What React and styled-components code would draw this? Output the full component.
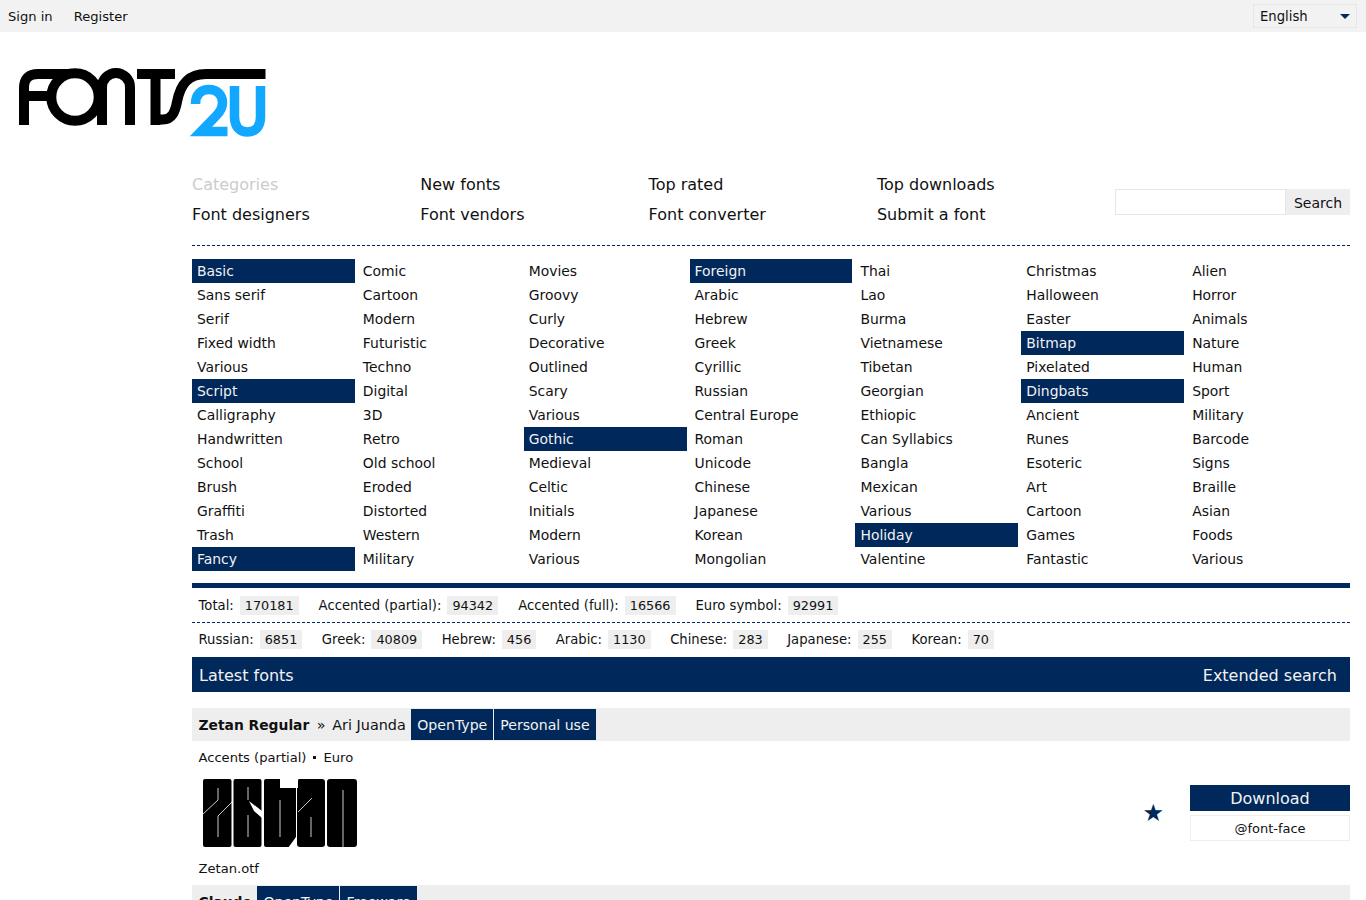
import styled, { createGlobalStyle } from "styled-components";

const navy = "#00285a";

const GlobalStyle = createGlobalStyle`
  html, body {
    margin: 0;
    height: 900px;
    overflow: hidden;
    background: #fff;
  }
  body {
    font-family: "DejaVu Sans", sans-serif;
    font-size: 13.92px;
    color: #111;
  }
`;

const TopBar = styled.div`
  display: flex;
  align-items: center;
  justify-content: space-between;
  height: 32px;
  padding: 0 8px;
  background: #f2f2f2;
  font-size: 13.1px;
`;

const TopLinks = styled.div`
  display: flex;
  gap: 21px;
`;

const LangSelect = styled.div`
  display: flex;
  align-items: center;
  justify-content: space-between;
  box-sizing: border-box;
  width: 104px;
  height: 24px;
  padding: 0 6px;
  border: 1px solid #e6e6e6;
  margin-right: 1px;
  font-size: 13.2px;
`;

const Caret = styled.span`
  width: 0;
  height: 0;
  border-left: 5px solid transparent;
  border-right: 5px solid transparent;
  border-top: 5px solid ${navy};
`;

const LogoBox = styled.div`
  height: 137px;
  padding-left: 18px;
`;

const LogoSvg = styled.svg`
  display: block;
  width: 250px;
  height: 72px;
  padding-top: 36px;
`;

const Main = styled.div`
  width: 1158px;
  margin-left: 192px;
`;

const NavRow = styled.div`
  display: flex;
  align-items: flex-start;
  justify-content: space-between;
  height: 76px;
  border-bottom: 1px dashed ${navy};
`;

const NavGrid = styled.div`
  display: grid;
  grid-template-columns: repeat(4, 228.3px);
  grid-auto-rows: 30px;
  align-items: center;
  font-size: 16px;
`;

const NavLink = styled.span`
  color: ${(p) => (p.$muted ? "#ccc" : "#111")};
`;

const SearchBox = styled.div`
  display: flex;
  height: 26px;
  margin-top: 20px;
`;

const SearchInput = styled.div`
  box-sizing: border-box;
  width: 171px;
  border: 1px solid #e6e6e6;
`;

const SearchButton = styled.div`
  display: flex;
  align-items: center;
  justify-content: center;
  box-sizing: border-box;
  width: 64px;
  padding-top: 1px;
  background: #eee;
  font-size: 14px;
`;

const CategoryGrid = styled.div`
  display: grid;
  grid-template-columns: repeat(7, 1fr);
  column-gap: 3px;
  padding: 13px 0 12px;
  border-bottom: 5px solid ${navy};
`;

const CategoryItem = styled.div`
  height: 24px;
  line-height: 24px;
  padding-left: 5px;
  background: ${(p) => (p.$head ? navy : "transparent")};
  color: ${(p) => (p.$head ? "#f2f2f2" : "#111")};
`;

const StatsRow = styled.div`
  display: flex;
  align-items: center;
  gap: ${(p) => (p.$second ? "19.5px" : "20px")};
  box-sizing: border-box;
  height: ${(p) => (p.$second ? "34px" : "35px")};
  padding: 0 0 ${(p) => (p.$second ? "2px" : "0")} 6.5px;
  font-size: 13.2px;
  border-bottom: ${(p) => (p.$second ? "none" : `1px dashed ${navy}`)};
`;

const Stat = styled.div`
  display: flex;
  align-items: center;
  gap: 6px;
`;

const Chip = styled.span`
  padding: ${(p) => (p.$low ? "1px 5px 0" : "0 5px")};
  line-height: ${(p) => (p.$low ? "18px" : "19px")};
  background: #eee;
  font-size: 12.8px;
`;

const SectionBar = styled.div`
  display: flex;
  align-items: center;
  justify-content: space-between;
  box-sizing: border-box;
  height: 35px;
  padding: 1px 13px 0 7px;
  background: ${navy};
  color: #f2f2f2;
  font-size: 16px;
`;

const FontHead = styled.div`
  display: flex;
  align-items: stretch;
  height: 33px;
  margin-top: ${(p) => p.$gap}px;
  padding-left: 6.5px;
  background: #eee;
`;

const FontName = styled.span`
  align-self: center;
  font-weight: 700;
  font-size: 13.85px;
  margin-right: ${(p) => (p.$alone ? "5px" : "0")};
`;

const FontAuthor = styled.span`
  align-self: center;
  margin-left: 7.5px;
  margin-right: 5px;
  font-size: 14.4px;
`;

const AuthorSep = styled.span`
  margin-right: 2px;
`;

const Tag = styled.span`
  display: flex;
  align-items: center;
  padding: 0 6px 0 ${(p) => (p.$next ? "6px" : "6.5px")};
  margin: 1px 0 1px ${(p) => (p.$next ? "1px" : "0")};
  background: ${navy};
  color: #f2f2f2;
  font-size: 14.1px;
`;

const FontMeta = styled.div`
  height: 33px;
  padding-left: 6.5px;
  line-height: 33px;
  font-size: 13.1px;
`;

const MetaDot = styled.span`
  display: inline-block;
  width: 3px;
  height: 3px;
  margin: 0 7px 2px 7px;
  background: #111;
  vertical-align: middle;
`;

const FontBody = styled.div`
  display: flex;
  align-items: center;
  justify-content: space-between;
  height: 72px;
  margin-top: 3px;
`;

const SpecimenSvg = styled.svg`
  display: block;
  width: 154px;
  height: 68px;
  margin-left: 11px;
`;

const Actions = styled.div`
  display: flex;
  align-items: center;
  gap: 26px;
`;

const Star = styled.span`
  color: ${navy};
  font-size: 24px;
  line-height: 1;
`;

const ActionStack = styled.div`
  display: flex;
  flex-direction: column;
  gap: 4px;
  width: 160px;
`;

const DownloadButton = styled.div`
  height: 26px;
  line-height: 28px;
  text-align: center;
  background: ${navy};
  color: #f2f2f2;
  font-size: 16px;
`;

const FaceButton = styled.div`
  box-sizing: border-box;
  height: 26px;
  line-height: 26px;
  text-align: center;
  border: 1px solid #eee;
  font-size: 13px;
`;

const FileName = styled.div`
  height: 36px;
  padding-left: 6.5px;
  line-height: 40px;
  font-size: 13.1px;
`;

const navLinks = [
  ["Categories", true],
  ["New fonts"],
  ["Top rated"],
  ["Top downloads"],
  ["Font designers"],
  ["Font vendors"],
  ["Font converter"],
  ["Submit a font"],
];

// a leading * marks a heading cell
const categories = [
  ["*Basic", "Sans serif", "Serif", "Fixed width", "Various", "*Script", "Calligraphy", "Handwritten", "School", "Brush", "Graffiti", "Trash", "*Fancy"],
  ["Comic", "Cartoon", "Modern", "Futuristic", "Techno", "Digital", "3D", "Retro", "Old school", "Eroded", "Distorted", "Western", "Military"],
  ["Movies", "Groovy", "Curly", "Decorative", "Outlined", "Scary", "Various", "*Gothic", "Medieval", "Celtic", "Initials", "Modern", "Various"],
  ["*Foreign", "Arabic", "Hebrew", "Greek", "Cyrillic", "Russian", "Central Europe", "Roman", "Unicode", "Chinese", "Japanese", "Korean", "Mongolian"],
  ["Thai", "Lao", "Burma", "Vietnamese", "Tibetan", "Georgian", "Ethiopic", "Can Syllabics", "Bangla", "Mexican", "Various", "*Holiday", "Valentine"],
  ["Christmas", "Halloween", "Easter", "*Bitmap", "Pixelated", "*Dingbats", "Ancient", "Runes", "Esoteric", "Art", "Cartoon", "Games", "Fantastic"],
  ["Alien", "Horror", "Animals", "Nature", "Human", "Sport", "Military", "Barcode", "Signs", "Braille", "Asian", "Foods", "Various"],
];

const statsTop = [
  ["Total:", "170181"],
  ["Accented (partial):", "94342"],
  ["Accented (full):", "16566"],
  ["Euro symbol:", "92991"],
];

const statsBottom = [
  ["Russian:", "6851"],
  ["Greek:", "40809"],
  ["Hebrew:", "456"],
  ["Arabic:", "1130"],
  ["Chinese:", "283"],
  ["Japanese:", "255"],
  ["Korean:", "70"],
];

function Logo() {
  return (
    <LogoSvg viewBox="18 68 250 72" role="img" aria-label="Fonts2U logo">
      <g fill="none" stroke="#000" strokeWidth="10">
        <path d="M24 125V88Q24 74 38 74H70" />
        <path d="M24 96H56" />
        <circle cx="75" cy="97" r="23.7" />
        <path d="M102 125V87A14 14 0 0 1 130 87V125" />
        <path d="M137 74H175" />
        <path d="M155.5 73V125" />
        <path d="M157 119.5H163C172 119.5 175 112 177 102C180 86 187 74 206 74H265.5" />
      </g>
      <g fill="none" stroke="#12a8ff" strokeWidth="9.5">
        <path d="M195.5 104C195.5 94 201 89.5 209 89.5C217 89.5 222.5 95 222.5 102.5C222.5 108 220 112 216 116L201 131.5H227.5" />
        <path d="M234.5 86V117C234.5 127 240 132 247.5 132C255 132 260.5 127 260.5 117V86" />
      </g>
    </LogoSvg>
  );
}

function Specimen() {
  return (
    <SpecimenSvg viewBox="203 779 154 68" role="img" aria-label="Zetan font specimen">
      <g fill="#000">
        <rect x="203" y="779" width="28.5" height="68" rx="2" />
        <rect x="233.5" y="779" width="28" height="68" rx="2" />
        <rect x="264" y="779" width="32" height="68" rx="2" />
        <rect x="297" y="779" width="28" height="68" rx="3" />
        <rect x="327" y="779" width="30" height="68" rx="3" />
      </g>
      <rect x="280" y="778" width="18" height="10" fill="#fff" />
      <polygon points="296,837 296,848 288,848" fill="#fff" />
      <polygon points="249,801 262,811 262,818 254,811" fill="#fff" />
      <g fill="none" stroke="#fff" strokeWidth="0.8">
        <path d="M218 788V800L203 814" />
        <path d="M232 802L218 816V837" />
        <path d="M248 787V800" />
        <path d="M248 815V837" />
        <path d="M280 800V837" />
        <path d="M312 798L298 812" />
        <path d="M311 817V837" />
        <path d="M343 790V848" />
      </g>
    </SpecimenSvg>
  );
}

export default function App() {
  return (
    <>
      <GlobalStyle />
      <TopBar>
        <TopLinks>
          <span>Sign in</span>
          <span>Register</span>
        </TopLinks>
        <LangSelect>
          English
          <Caret />
        </LangSelect>
      </TopBar>
      <LogoBox>
        <Logo />
      </LogoBox>
      <Main>
        <NavRow>
          <NavGrid>
            {navLinks.map(([label, muted]) => (
              <NavLink key={label} $muted={muted}>
                {label}
              </NavLink>
            ))}
          </NavGrid>
          <SearchBox>
            <SearchInput />
            <SearchButton>Search</SearchButton>
          </SearchBox>
        </NavRow>
        <CategoryGrid>
          {categories.map((col, i) => (
            <div key={i}>
              {col.map((c, j) => (
                <CategoryItem key={j} $head={c[0] === "*"}>
                  {c.replace("*", "")}
                </CategoryItem>
              ))}
            </div>
          ))}
        </CategoryGrid>
        <StatsRow>
          {statsTop.map(([label, n]) => (
            <Stat key={label}>
              {label}
              <Chip>{n}</Chip>
            </Stat>
          ))}
        </StatsRow>
        <StatsRow $second>
          {statsBottom.map(([label, n]) => (
            <Stat key={label}>
              {label}
              <Chip $low>{n}</Chip>
            </Stat>
          ))}
        </StatsRow>
        <SectionBar>
          <span>Latest fonts</span>
          <span>Extended search</span>
        </SectionBar>
        <FontHead $gap={16}>
          <FontName>Zetan Regular</FontName>
          <FontAuthor>
            <AuthorSep>»</AuthorSep> Ari Juanda
          </FontAuthor>
          <Tag>OpenType</Tag>
          <Tag $next>Personal use</Tag>
        </FontHead>
        <FontMeta>
          Accents (partial)
          <MetaDot />
          Euro
        </FontMeta>
        <FontBody>
          <Specimen />
          <Actions>
            <Star>★</Star>
            <ActionStack>
              <DownloadButton>Download</DownloadButton>
              <FaceButton>@font-face</FaceButton>
            </ActionStack>
          </Actions>
        </FontBody>
        <FileName>Zetan.otf</FileName>
        <FontHead $gap={0}>
          <FontName $alone>Claude</FontName>
          <Tag>OpenType</Tag>
          <Tag $next>Freeware</Tag>
        </FontHead>
      </Main>
    </>
  );
}
